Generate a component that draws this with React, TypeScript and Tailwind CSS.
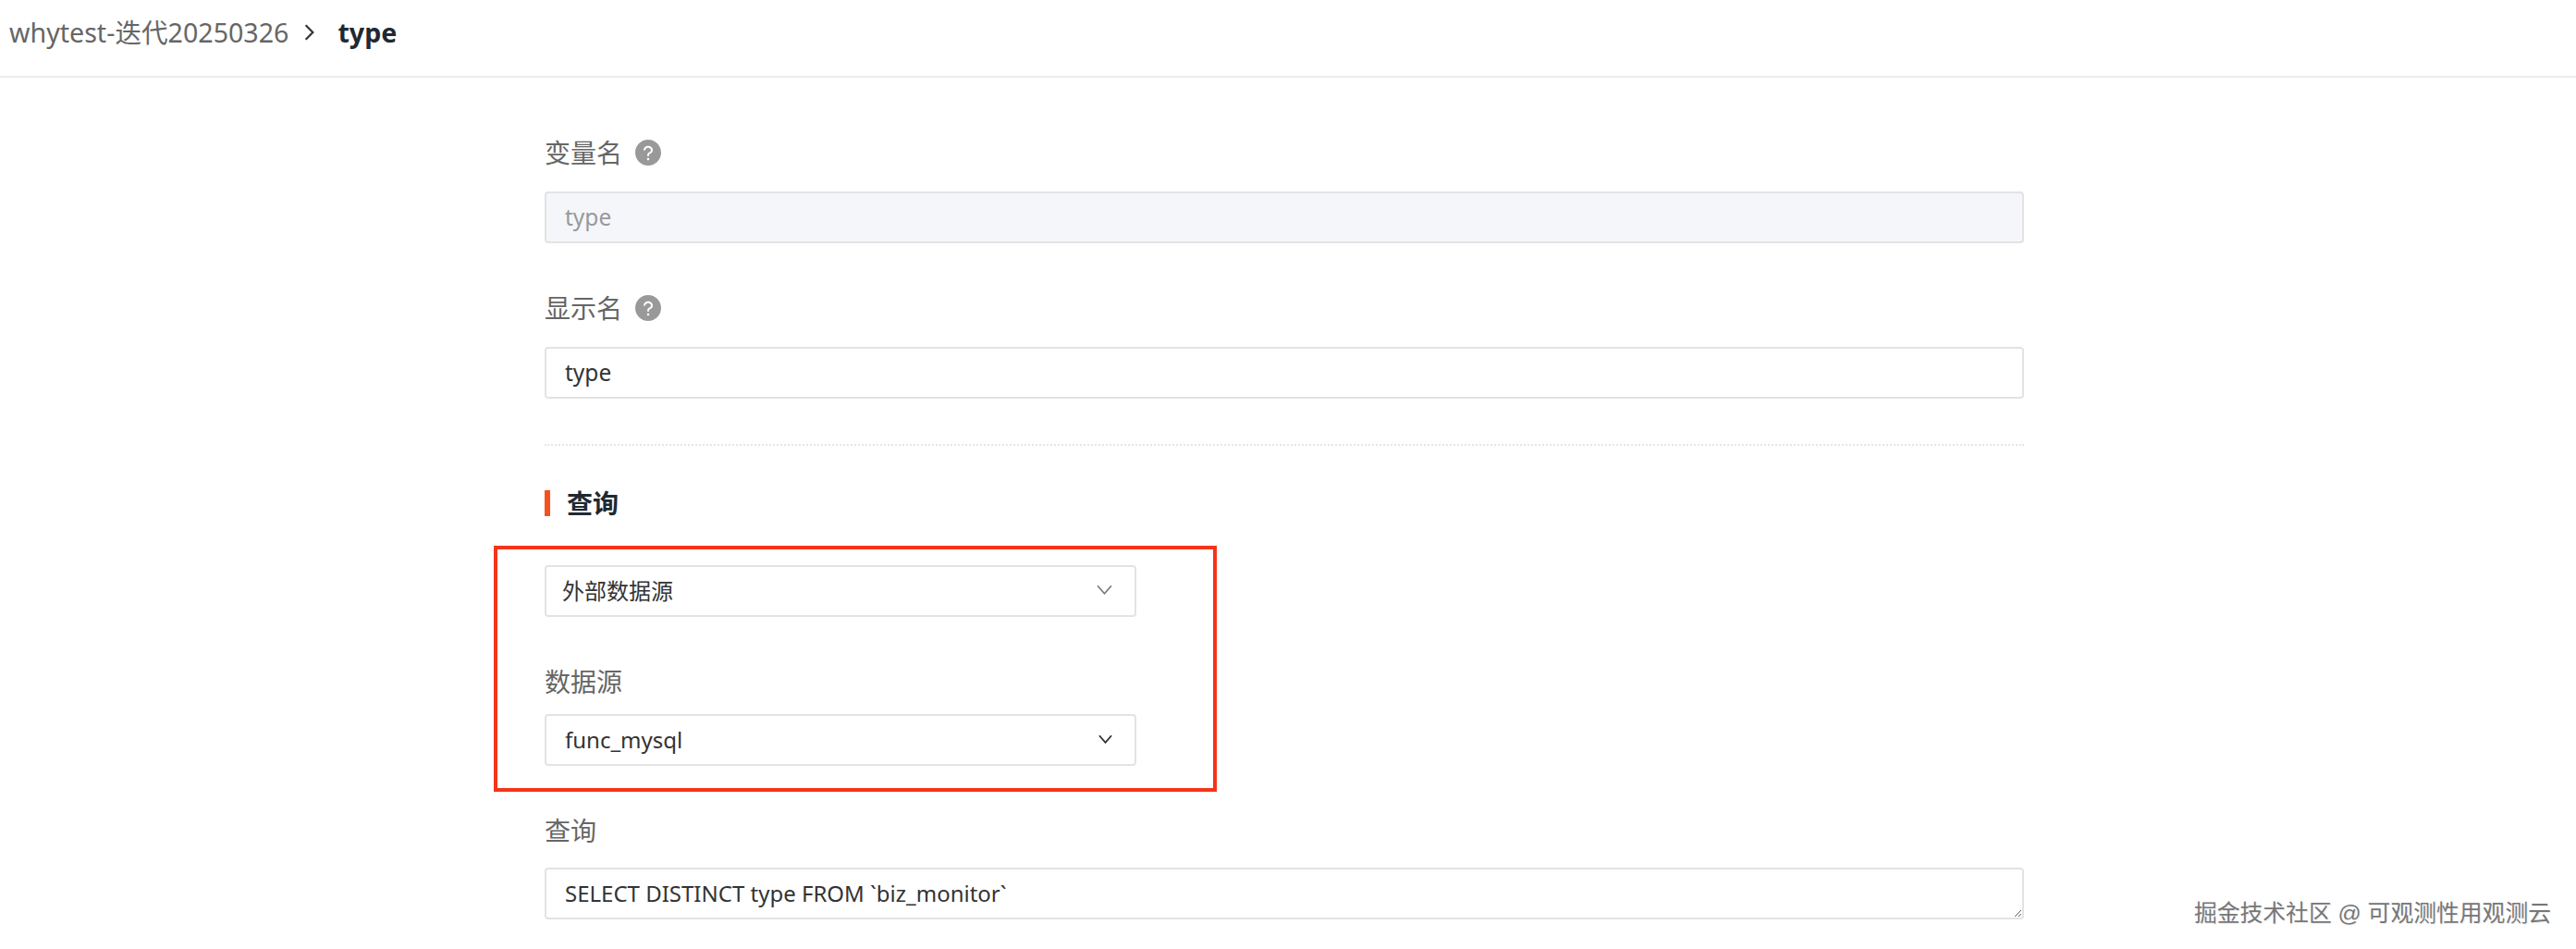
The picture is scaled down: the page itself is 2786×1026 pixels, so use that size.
import { AiFillQuestionCircle } from "react-icons/ai";

const font = "font-['Noto_Sans','Noto_Sans_CJK_SC',sans-serif]";

function Label({ text, help }: { text: string; help?: boolean }) {
  return (
    <div className="flex h-[40px] items-center gap-[12px] text-[28px] text-[#666]">
      <span>{text}</span>
      {help && <AiFillQuestionCircle className="text-[32px] text-[#999]" />}
    </div>
  );
}

function Select({ value, dark }: { value: string; dark?: boolean }) {
  return (
    <div className="flex h-[56px] w-[640px] items-center justify-between rounded-[4px] border-2 border-[#e3e3e3] pl-[20px] pr-[24px] text-[24px] text-[#333]">
      <span className={dark ? "" : "-ml-[3px]"}>{value}</span>
      <svg
        viewBox="0 0 16 10"
        className={dark ? "mb-[2px] h-[10px] w-[15px]" : "mb-[3px] h-[11px] w-[17px]"}
        fill="none"
        stroke={dark ? "#333" : "#777"}
        strokeWidth={dark ? 2 : 1.5}
      >
        <path d="M1 1l7 8 7-8" />
      </svg>
    </div>
  );
}

export default function App() {
  return (
    <div className={`relative h-[1026px] w-[2786px] overflow-hidden bg-white ${font}`}>
      {/* Breadcrumb */}
      <div className="flex h-[84px] items-center border-b-2 border-[#ececec] pb-[12px] pl-[10px] text-[28.6px]">
        <span className="text-[#666]">whytest-迭代20250326</span>
        <svg viewBox="0 0 10 16" className="ml-[17px] h-[18px] w-[11px]" fill="none" stroke="#333" strokeWidth="2">
          <path d="M1.5 1l7 7-7 7" />
        </svg>
        <span className="ml-[25px] font-bold text-[#1f2933]">type</span>
      </div>

      {/* Form */}
      <div className="ml-[589px] w-[1600px] pt-[61px]">
        <Label text="变量名" help />
        <div className="mt-[22px] flex h-[56px] items-center rounded-[4px] border-2 border-[#e3e3e3] bg-[#f5f6fa] pl-[20px] text-[24.5px] text-[#999]">
          type
        </div>

        <div className="mt-[50px]">
          <Label text="显示名" help />
        </div>
        <div className="mt-[22px] flex h-[56px] items-center rounded-[4px] border-2 border-[#e3e3e3] pl-[20px] text-[24.5px] text-[#333]">
          type
        </div>

        <div className="mt-[49px] border-t-2 border-dotted border-[#e6e6e6]" />

        <div className="mt-[48px] flex h-[28px] items-center border-l-[6px] border-[#f4511e] pl-[18px] text-[28px] font-bold text-[#1f2933]">
          查询
        </div>

        <div className="relative mt-[53px]">
          <Select value="外部数据源" />
          <div className="mt-[50px]">
            <Label text="数据源" />
          </div>
          <div className="mt-[15px]">
            <Select value="func_mysql" dark />
          </div>
          {/* Red annotation box */}
          <div className="absolute left-[-55px] top-[-21px] h-[266px] w-[782px] border-4 border-[#f5341a]" />
        </div>

        <div className="mt-[50px]">
          <Label text="查询" />
        </div>
        <textarea
          readOnly
          defaultValue="SELECT DISTINCT type FROM `biz_monitor`"
          className="mt-[20px] block h-[56px] w-full rounded-[4px] border-2 border-[#e3e3e3] px-[20px] py-[8px] text-[24px] text-[#333] outline-none"
        />
      </div>

      {/* Watermark */}
      <div className="absolute bottom-[20px] right-[27px] font-['Liberation_Sans','Noto_Sans_CJK_SC',sans-serif] text-[24.8px] text-[#777] [text-shadow:1px_1px_0_#eee]">
        掘金技术社区 @ 可观测性用观测云
      </div>
    </div>
  );
}
